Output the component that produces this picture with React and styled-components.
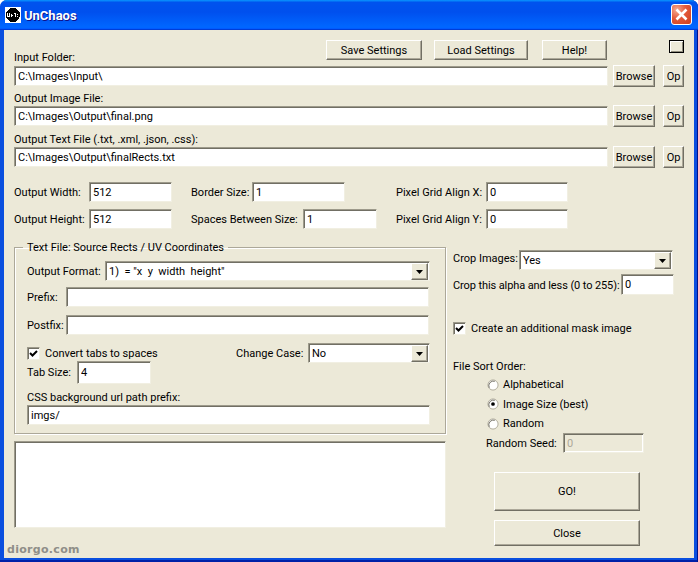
import React from 'react'
import styled, { createGlobalStyle } from 'styled-components'

const GlobalStyle = createGlobalStyle`
  html, body {
    margin: 0;
    padding: 0;
    background: #fff;
  }

  * {
    box-sizing: border-box;
  }
`

const sunken = `
  border: 1px solid;
  border-color: #9d9a8b #f1efe2 #f1efe2 #9d9a8b;
  box-shadow: inset 1px 1px 0 #716f64, inset -1px -1px 0 #fff;
`

const raised = `
  border: 1px solid;
  border-color: #fff #716f64 #716f64 #fff;
  box-shadow: inset -1px -1px 0 #aca899;
`

const Window = styled.div`
  width: 698px;
  height: 562px;
  display: flex;
  flex-direction: column;
  border-radius: 7px 7px 0 0;
  overflow: hidden;
  background: #0a4fdf;
  box-shadow: inset -1px 0 0 #00138c, inset 0 -2px 0 #0020a8;
  font-family: Roboto, 'Liberation Sans', Arial, sans-serif;
  font-size: 11px;
  line-height: 13px;
  color: #000;
`

const TitleBar = styled.div`
  height: 30px;
  flex: none;
  display: flex;
  align-items: center;
  padding: 0 6px 0 5px;
  background: linear-gradient(180deg, #0997ff, #0053ee 8%, #0050ee 40%, #0066ff 88%, #0066ff 93%, #005bff 95%, #003dd7 96%, #003dd7);
`

const TitleIcon = styled.svg`
  width: 16px;
  height: 16px;
  flex: none;
  shape-rendering: crispEdges;
`

const TitleText = styled.span`
  margin-left: 3px;
  flex: 1;
  color: #fff;
  font-weight: bold;
  font-size: 13px;
  text-shadow: 1px 1px 0 #0f1089;
`

const CloseButton = styled.div`
  width: 21px;
  height: 21px;
  margin-top: -1px;
  display: flex;
  align-items: center;
  justify-content: center;
  border: 1px solid #fff;
  border-radius: 3px;
  background: radial-gradient(circle at 25% 25%, #f6ab91, #e2593a 45%, #cf3f1e);
`

const Client = styled.div`
  flex: 1;
  margin: 0 4px 4px;
  padding: 10px 10px 0;
  background: #ece9d8;
`

const HeaderRow = styled.div`
  height: 25px;
  padding-bottom: 1px;
  display: flex;
  justify-content: space-between;
  align-items: flex-end;
`

const TopButtons = styled.div`
  display: flex;
  align-self: flex-start;
  margin-right: 77px;
  gap: 12px;
`

const Button = styled.button`
  ${raised}
  width: ${p => p.$w}px;
  height: ${p => p.$h || 20}px;
  margin-left: ${p => p.$left || 0}px;
  padding: 0;
  flex: none;
  background: #ece9d8;
  font: inherit;
  color: #000;
`

const Swatch = styled.div`
  position: absolute;
  top: 40px;
  left: 669px;
  width: 15px;
  height: 13px;
  border: 1px solid #000;
  background: #ece9d8;
  box-shadow: inset 1px 1px 0 #fff, inset -1px -1px 0 #8f8c7c;
`

const Label = styled.label`
  display: block;
  flex: none;
  width: ${p => (p.$w ? `${p.$w}px` : 'auto')};
  margin-top: ${p => p.$top || 0}px;
  letter-spacing: ${p => p.$track || 0}px;
  white-space: nowrap;
`

const FileBlock = styled.div`
  display: flex;
  flex-direction: column;
  margin-bottom: 5px;
`

const FileRow = styled.div`
  height: 22px;
  display: flex;
  align-items: center;
`

const Field = styled.input`
  ${sunken}
  display: block;
  flex: ${p => (p.$w ? 'none' : 1)};
  width: ${p => (p.$w ? `${p.$w}px` : '100%')};
  min-width: 0;
  height: ${p => p.$h || 20}px;
  padding: 0 0 0 3px;
  outline: none;
  background: ${p => (p.disabled ? '#ece9d8' : '#fff')};
  font: inherit;
  color: ${p => (p.disabled ? '#aca899' : '#000')};
`

const Sizes = styled.div`
  display: grid;
  grid-template-columns: 177px 205px 1fr;
  grid-auto-rows: 20px;
  row-gap: 7px;
  margin-top: 14px;
`

const SizeCell = styled.div`
  display: flex;
  align-items: center;
`

const Columns = styled.div`
  display: flex;
  margin-top: 12px;
`

const LeftColumn = styled.div`
  width: 432px;
  flex: none;
  display: flex;
  flex-direction: column;
`

const RightColumn = styled.div`
  margin-left: 7px;
  flex: 1;
  display: flex;
  flex-direction: column;
  padding-top: 9px;
`

const Group = styled.fieldset`
  margin: 0;
  padding: 7px 15px 0 12px;
  height: 193px;
  border: 1px solid #aca899;
  box-shadow: 1px 1px 0 #fff, inset 1px 1px 0 #fff;
  min-width: 0;
`

const Legend = styled.legend`
  margin-left: -4px;
  padding: 0 4px;
`

const FormRow = styled.div`
  display: flex;
  align-items: center;
  height: 20px;
  margin-top: ${p => p.$top || 0}px;
`

const Spacer = styled.div`
  flex: 1;
`

const SelectBox = styled.div`
  ${sunken}
  display: flex;
  align-items: flex-start;
  flex: ${p => (p.$w ? 'none' : 1)};
  width: ${p => (p.$w ? `${p.$w}px` : 'auto')};
  height: 20px;
  padding: 1px 1px 1px 3px;
  background: #fff;
`

const SelectText = styled.span`
  flex: 1;
  line-height: 17px;
  white-space: pre;
`

const SelectArrow = styled.div`
  ${raised}
  width: 17px;
  height: 17px;
  display: flex;
  align-items: center;
  justify-content: center;
  background: #ece9d8;
`

const CheckRow = styled.div`
  display: flex;
  align-items: center;
  gap: 5px;
  margin-top: ${p => p.$top || 0}px;
`

const CheckBox = styled.div`
  ${sunken}
  width: 13px;
  height: 13px;
  flex: none;
  display: flex;
  align-items: center;
  justify-content: center;
  background: #fff;
`

const Log = styled.textarea`
  ${sunken}
  display: block;
  margin-top: 7px;
  width: 432px;
  height: 87px;
  padding: 2px;
  resize: none;
  outline: none;
  overflow: hidden;
  background: #fff;
`

const Watermark = styled.div`
  margin-top: 15px;
  margin-left: -7px;
  font-family: 'DejaVu Sans', sans-serif;
  font-weight: bold;
  font-size: 11px;
  letter-spacing: 0.3px;
  color: #8f8e88;
`

const SortTitle = styled.div`
  margin-top: 25px;
`

const RadioList = styled.div`
  margin: 5px 0 0 34px;
  display: flex;
  flex-direction: column;
  gap: 6.5px;
`

const RadioRow = styled.div`
  height: 13px;
  display: flex;
  align-items: center;
  gap: 4px;
`

const SeedRow = styled.div`
  display: flex;
  align-items: center;
  margin: 3px 0 0 33px;
`

const ActionColumn = styled.div`
  margin: 19px 0 0 41px;
  display: flex;
  flex-direction: column;
  gap: 9px;
`

const Arrow = () => (
  <svg width="7" height="4" viewBox="0 0 7 4">
    <path d="M0 0h7L3.5 4z" fill="#000" />
  </svg>
)

const Check = () => (
  <svg width="9" height="9" viewBox="0 0 9 9">
    <path d="M1 4l2.5 2.5L8 2" fill="none" stroke="#000" strokeWidth="2" />
  </svg>
)

const Radio = ({ on }) => (
  <svg width="12" height="12" viewBox="0 0 13 13">
    <circle cx="6.5" cy="6.5" r="5.5" fill="#fff" stroke="#aca899" />
    <path d="M2.5 9.5a5 5 0 0 1 6-7" fill="none" stroke="#716f64" />
    {on && <circle cx="6.5" cy="6.5" r="2" fill="#000" />}
  </svg>
)

const files = [
  { label: 'Input Folder:', value: 'C:\\Images\\Input\\' },
  { label: 'Output Image File:', value: 'C:\\Images\\Output\\final.png' },
  { label: 'Output Text File (.txt, .xml, .json, .css):', value: 'C:\\Images\\Output\\finalRects.txt', top: 1 },
]

const FileControls = ({ value }) => (
  <FileRow>
    <Field readOnly value={value} />
    <Button $w={42} $h={22} $left={5}>Browse</Button>
    <Button $w={21} $h={22} $left={8}>Op</Button>
  </FileRow>
)

const App = () => {
  return (
    <Window>
      <GlobalStyle />
      <TitleBar>
        <TitleIcon viewBox="0 0 16 16">
          <rect width="16" height="16" fill="#fff" />
          <circle cx="8" cy="8" r="7" fill="#000" />
          <path d="M2 6h1v3h1V6h1v4H2zM6 7h1v1h1v1H7v1H6zM9 6h2v4h-1V7H9zM12 7h1v1h-1zM12 9h1v1h-1z" fill="#fff" />
        </TitleIcon>
        <TitleText>UnChaos</TitleText>
        <CloseButton>
          <svg width="13" height="13" viewBox="0 0 13 13">
            <path d="M1.5 1.5l10 10M11.5 1.5l-10 10" stroke="#fff" strokeWidth="2.6" />
          </svg>
        </CloseButton>
      </TitleBar>
      <Client>
        <Swatch />
        <HeaderRow>
          <Label>{files[0].label}</Label>
          <TopButtons>
            <Button $w={96}>Save Settings</Button>
            <Button $w={94}>Load Settings</Button>
            <Button $w={65} $left={2}>Help!</Button>
          </TopButtons>
        </HeaderRow>
        <FileBlock>
          <FileControls value={files[0].value} />
        </FileBlock>
        {files.slice(1).map(f => (
          <FileBlock key={f.label}>
            <Label $top={f.top}>{f.label}</Label>
            <FileControls value={f.value} />
          </FileBlock>
        ))}

        <Sizes>
          <SizeCell><Label $w={75}>Output Width:</Label><Field readOnly $w={83} value="512" /></SizeCell>
          <SizeCell><Label $w={61}>Border Size:</Label><Field readOnly $w={93} value="1" /></SizeCell>
          <SizeCell><Label $w={90}>Pixel Grid Align X:</Label><Field readOnly $w={82} value="0" /></SizeCell>
          <SizeCell><Label $w={75}>Output Height:</Label><Field readOnly $w={83} value="512" /></SizeCell>
          <SizeCell><Label $w={112}>Spaces Between Size:</Label><Field readOnly $w={74} value="1" /></SizeCell>
          <SizeCell><Label $w={90}>Pixel Grid Align Y:</Label><Field readOnly $w={82} value="0" /></SizeCell>
        </Sizes>

        <Columns>
          <LeftColumn>
            <Group>
              <Legend>Text File: Source Rects / UV Coordinates</Legend>
              <FormRow>
                <Label $w={78}>Output Format:</Label>
                <SelectBox>
                  <SelectText>1)  = "x  y  width  height"</SelectText>
                  <SelectArrow><Arrow /></SelectArrow>
                </SelectBox>
              </FormRow>
              <FormRow $top={6}>
                <Label $w={39}>Prefix:</Label>
                <Field readOnly $w={363} value="" />
              </FormRow>
              <FormRow $top={8}>
                <Label $w={39}>Postfix:</Label>
                <Field readOnly $w={363} value="" />
              </FormRow>
              <FormRow $top={8}>
                <CheckRow>
                  <CheckBox><Check /></CheckBox>
                  <Label>Convert tabs to spaces</Label>
                </CheckRow>
                <Spacer />
                <Label $w={72}>Change Case:</Label>
                <SelectBox $w={122}>
                  <SelectText>No</SelectText>
                  <SelectArrow><Arrow /></SelectArrow>
                </SelectBox>
              </FormRow>
              <FormRow $top={-1}>
                <Label $w={50}>Tab Size:</Label>
                <Field readOnly $w={74} $h={23} value="4" />
              </FormRow>
              <Label $top={9}>CSS background url path prefix:</Label>
              <FormRow $top={1}>
                <Field readOnly value="imgs/" />
              </FormRow>
            </Group>
            <Log readOnly value="" />
            <Watermark>diorgo.com</Watermark>
          </LeftColumn>

          <RightColumn>
            <FormRow>
              <Label $w={66} $top={-4}>Crop Images:</Label>
              <SelectBox $w={154}>
                <SelectText>Yes</SelectText>
                <SelectArrow><Arrow /></SelectArrow>
              </SelectBox>
            </FormRow>
            <FormRow $top={4}>
              <Label $w={168} $top={2} $track={-0.1}>Crop this alpha and less (0 to 255):</Label>
              <Field readOnly $w={53} $h={21} value="0" />
            </FormRow>
            <CheckRow $top={28}>
              <CheckBox><Check /></CheckBox>
              <Label>Create an additional mask image</Label>
            </CheckRow>
            <SortTitle>File Sort Order:</SortTitle>
            <RadioList>
              <RadioRow><Radio /><Label>Alphabetical</Label></RadioRow>
              <RadioRow><Radio on /><Label>Image Size (best)</Label></RadioRow>
              <RadioRow><Radio /><Label>Random</Label></RadioRow>
            </RadioList>
            <SeedRow>
              <Label $w={77}>Random Seed:</Label>
              <Field readOnly disabled $w={81} value="0" />
            </SeedRow>
            <ActionColumn>
              <Button $w={146} $h={39}>GO!</Button>
              <Button $w={146} $h={26}>Close</Button>
            </ActionColumn>
          </RightColumn>
        </Columns>
      </Client>
    </Window>
  )
}

export default App
